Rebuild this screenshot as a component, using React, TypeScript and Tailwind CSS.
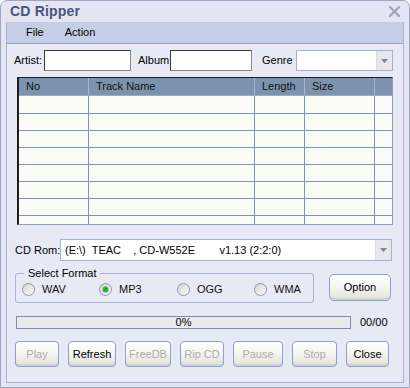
import React from 'react';

const FONT = "font-['Liberation_Sans',Arial,sans-serif]";

const ComboArrow = () => (
  <div className="w-[16px] h-full shrink-0 flex items-center justify-center bg-[#e8e8ec] border-l border-[#dadde8]">
    <svg width="7" height="4" viewBox="0 0 7 4">
      <path d="M0 0h7L3.5 4z" fill="#7585ad" />
    </svg>
  </div>
);

const Radio: React.FC<{ label: string; checked?: boolean; width: string }> = ({ label, checked, width }) => (
  <div className={`flex items-center shrink-0 ${width}`}>
    <span className="w-[13px] h-[13px] rounded-full border border-[#8796b6] bg-gradient-to-br from-[#d6d6d0] to-[#fbfbf9] flex items-center justify-center">
      {checked && <span className="w-[5px] h-[5px] rounded-full bg-[#30a63a] shadow-[0_0_0_1px_#8fd08f]" />}
    </span>
    <span className="ml-[7px] text-[#111]">{label}</span>
  </div>
);

const XpButton: React.FC<{ label: string; width: string; disabled?: boolean }> = ({ label, width, disabled }) => (
  <button
    className={`${width} h-[26px] shrink-0 rounded-[4px] border border-[#8ca0d2] bg-gradient-to-b from-[#ffffff] via-[#f4f4f0] to-[#e2e1da] shadow-[inset_0_-2px_0_#d6d3c8] text-[11px] ${
      disabled ? 'text-[#aeaca6]' : 'text-[#000]'
    }`}
  >
    {label}
  </button>
);

const columns = [
  { name: 'No', w: 'w-[70px]' },
  { name: 'Track Name', w: 'w-[166px]' },
  { name: 'Length', w: 'w-[50px]' },
  { name: 'Size', w: 'w-[70px]' },
  { name: '', w: 'flex-1' },
];

export default function App() {
  return (
    <div className={`${FONT} w-[410px] h-[388px] bg-[#e3e6f2] border border-[#9ca6c6] rounded-t-[7px] flex flex-col text-[11px] text-black select-none`}>
      {/* Title bar */}
      <div className="h-[21px] flex items-center justify-between pl-[9px] pr-[9px]">
        <span className="text-[14px] font-bold text-[#4a5679] tracking-[0.2px]">CD Ripper</span>
        <svg width="11" height="11" viewBox="0 0 11 11" className="mt-[-1px]">
          <path d="M1 1L10 10M10 1L1 10" stroke="#a0a7bd" strokeWidth="2.4" strokeLinecap="round" />
        </svg>
      </div>

      <div className="flex-1 px-[5px] pb-[4px] flex">
        <div className="flex-1 flex flex-col bg-[#e7e9f5] border border-t-0 border-[#a9b2cf]">
          {/* Menu */}
          <div className="h-[22px] bg-[#c6cee6] border-b border-[#8ea2d6] flex items-center">
            <span className="ml-[19px]">File</span>
            <span className="ml-[21px]">Action</span>
          </div>

          {/* Artist / Album / Genre */}
          <div className="mt-[6px] h-[21px] flex items-center pl-[7px] whitespace-nowrap">
            <span className="w-[30px] shrink-0">Artist:</span>
            <div className="w-[87px] h-[21px] shrink-0 bg-white border border-[#3a3a3a] border-r-[#8a8a8a] border-b-[#8a8a8a]" />
            <span className="ml-[7px] w-[32px] shrink-0">Album</span>
            <div className="w-[82px] h-[21px] shrink-0 bg-white border border-[#3a3a3a] border-r-[#8a8a8a] border-b-[#8a8a8a]" />
            <span className="ml-[10px] w-[34px] shrink-0">Genre</span>
            <div className="w-[97px] h-[21px] shrink-0 bg-white border border-[#a3b1d6] flex justify-end">
              <ComboArrow />
            </div>
          </div>

          {/* Track list */}
          <div className="mt-[6px] ml-[10px] w-[376px] h-[148px] border-t border-l-2 border-r border-b border-[#8c9fbd] border-t-[#1e1e1e] border-l-[#1e1e1e] bg-[#fbfbf8] overflow-hidden">
            <div className="h-[18px] bg-[#7c93b0] flex border-b border-[#9aabc2]">
              {columns.map((c, i) => (
                <div
                  key={i}
                  className={`${c.w} h-full flex items-center pl-[7px] text-[#111] ${i < 4 ? 'border-r border-[#a8b6c8]' : ''}`}
                >
                  {c.name}
                </div>
              ))}
            </div>
            {Array.from({ length: 8 }).map((_, r) => (
              <div key={r} className={`${r === 0 ? 'h-[18px]' : 'h-[17px]'} flex border-b border-[#7e93ae]`}>
                {columns.map((c, i) => (
                  <div key={i} className={`${c.w} h-full ${i < 4 ? 'border-r border-[#7e93ae]' : ''}`} />
                ))}
              </div>
            ))}
          </div>

          {/* CD Rom */}
          <div className="mt-[14px] h-[22px] flex items-center pl-[8px] whitespace-nowrap">
            <span className="w-[45px] shrink-0">CD Rom:</span>
            <div className="w-[332px] h-[22px] shrink-0 bg-white border border-[#a3b1d6] flex items-center">
              <span className="flex-1 pl-[4px] whitespace-pre">{'(E:\\)  TEAC    , CD-W552E        v1.13 (2:2:0)'}</span>
              <ComboArrow />
            </div>
          </div>

          {/* Format + Option */}
          <div className="mt-[12px] flex items-start pl-[8px]">
            <div className="relative w-[299px] h-[30px] shrink-0 border border-[#a7b3d8] rounded-[3px] flex items-center pl-[6px] pt-[3px]">
              <span className="absolute left-[8px] top-[-8px] px-[4px] bg-[#e7e9f5] leading-[14px]">Select Format</span>
              <Radio label="WAV" width="w-[77px]" />
              <Radio label="MP3" width="w-[78px]" checked />
              <Radio label="OGG" width="w-[77px]" />
              <Radio label="WMA" width="w-[60px]" />
            </div>
            <div className="ml-[15px] mt-[1px]">
              <button className="w-[62px] h-[27px] rounded-[5px] border border-[#8ca0d2] bg-gradient-to-b from-[#ffffff] via-[#f4f4f0] to-[#e2e1da] shadow-[inset_0_-2px_0_#d6d3c8] text-[11px]">
                Option
              </button>
            </div>
          </div>

          {/* Progress */}
          <div className="mt-[13px] h-[13px] flex items-center pl-[9px]">
            <div className="w-[335px] h-[13px] shrink-0 border border-[#7d8bb2] bg-[#ebebeb] flex items-center justify-center leading-none">
              0%
            </div>
            <span className="ml-[9px]">00/00</span>
          </div>

          {/* Buttons */}
          <div className="mt-[12px] flex items-center gap-[9px] pl-[8px]">
            <XpButton label="Play" width="w-[44px]" disabled />
            <XpButton label="Refresh" width="w-[48px]" />
            <XpButton label="FreeDB" width="w-[46px]" disabled />
            <XpButton label="Rip CD" width="w-[44px]" disabled />
            <XpButton label="Pause" width="w-[50px]" disabled />
            <XpButton label="Stop" width="w-[45px]" disabled />
            <XpButton label="Close" width="w-[43px]" />
          </div>
        </div>
      </div>
    </div>
  );
}
